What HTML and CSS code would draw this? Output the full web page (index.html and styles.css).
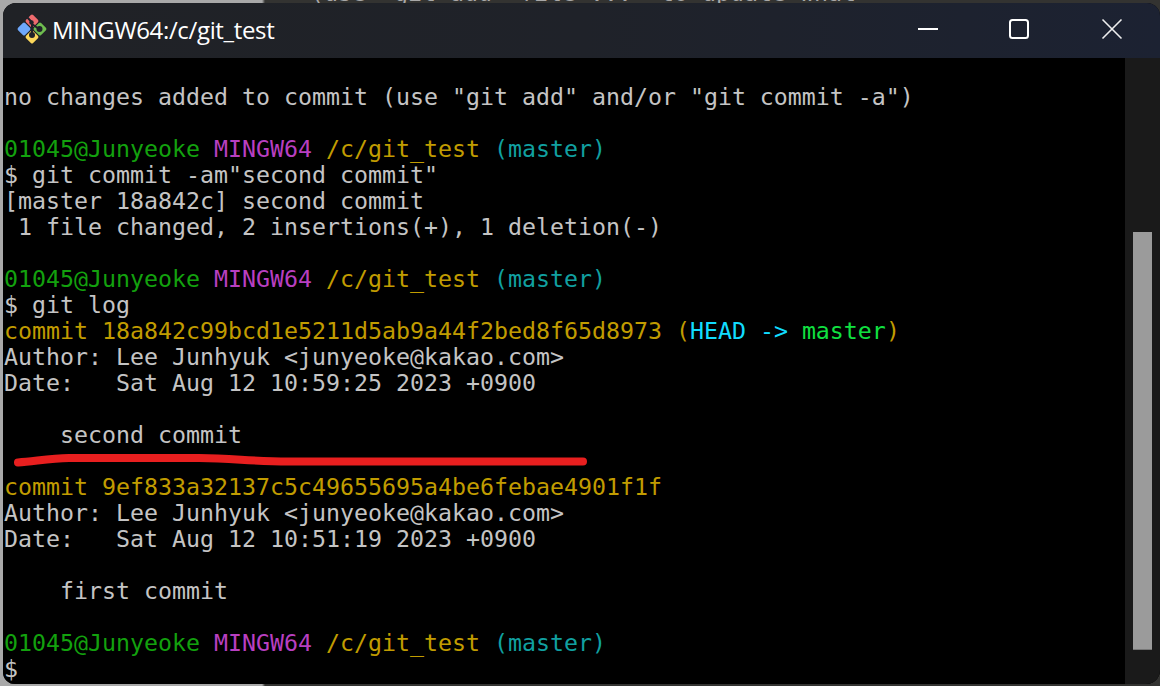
FILE: index.html
```html
<!DOCTYPE html>
<html lang="en">
<head>
<meta charset="utf-8">
<title>MINGW64:/c/git_test</title>
<link rel="stylesheet" href="styles.css">
</head>
<body>
<div class="desktop">
  <div class="backdrop"><div class="backdrop-left"></div><div class="backdrop-right"><span class="backdrop-text">(use "git add &lt;file&gt;..." to update what</span></div></div>
  <div class="window">
    <header class="titlebar">
      <svg class="logo" width="32" height="32" viewBox="0 0 32 32" aria-hidden="true">
        <rect x="11" y="3" width="10" height="10" rx="1.6" transform="rotate(45 16 8)" fill="#ee6b6e"/>
        <rect x="3" y="11" width="10" height="10" rx="1.6" transform="rotate(45 8 16)" fill="#6ea8fb"/>
        <rect x="19" y="11" width="10" height="10" rx="1.6" transform="rotate(45 24 16)" fill="#6ebd4f"/>
        <rect x="11" y="19" width="10" height="10" rx="1.6" transform="rotate(45 16 24)" fill="#fbd75b"/>
        <path d="M10.5 3.500 L16 9.500 L16 22 M16 11 L23 16" fill="none" stroke="#20222a" stroke-width="2"/>
        <circle cx="16" cy="22" r="3" fill="#20222a"/>
        <circle cx="23.500" cy="16" r="3" fill="#20222a"/>
        <circle cx="15.500" cy="9.500" r="2.200" fill="#20222a"/>
      </svg>
      <span class="title">MINGW64:/c/git_test</span>
      <div class="controls">
        <button class="control" aria-label="Minimize"><svg width="22" height="22" viewBox="0 0 22 22"><path d="M1 11H21" stroke="#fff" stroke-width="2"/></svg></button>
        <button class="control" aria-label="Maximize"><svg width="22" height="22" viewBox="0 0 22 22"><rect x="1" y="2" width="18" height="18" rx="2.500" fill="none" stroke="#fff" stroke-width="2"/></svg></button>
        <button class="control" aria-label="Close"><svg width="22" height="22" viewBox="0 0 22 22"><path d="M1.500 1.500L20.500 20.500M20.500 1.500L1.500 20.500" stroke="#eee" stroke-width="1.600"/></svg></button>
      </div>
    </header>
    <div class="body">
      <pre class="terminal"><span class="row"> </span>
<span class="row">no changes added to commit (use "git add" and/or "git commit -a")</span>
<span class="row"> </span>
<span class="row"><span class="green">01045@Junyeoke</span> <span class="magenta">MINGW64</span> <span class="yellow">/c/git_test</span> <span class="cyan">(master)</span></span>
<span class="row">$ git commit -am"second commit"</span>
<span class="row">[master 18a842c] second commit</span>
<span class="row"> 1 file changed, 2 insertions(+), 1 deletion(-)</span>
<span class="row"> </span>
<span class="row"><span class="green">01045@Junyeoke</span> <span class="magenta">MINGW64</span> <span class="yellow">/c/git_test</span> <span class="cyan">(master)</span></span>
<span class="row">$ git log</span>
<span class="row"><span class="yellow">commit 18a842c99bcd1e5211d5ab9a44f2bed8f65d8973 (</span><span class="head">HEAD -&gt; </span><span class="branch">master</span><span class="yellow">)</span></span>
<span class="row">Author: Lee Junhyuk &lt;junyeoke@kakao.com&gt;</span>
<span class="row">Date:   Sat Aug 12 10:59:25 2023 +0900</span>
<span class="row"> </span>
<span class="row">    second commit</span>
<span class="row"> </span>
<span class="row"><span class="yellow">commit 9ef833a32137c5c49655695a4be6febae4901f1f</span></span>
<span class="row">Author: Lee Junhyuk &lt;junyeoke@kakao.com&gt;</span>
<span class="row">Date:   Sat Aug 12 10:51:19 2023 +0900</span>
<span class="row"> </span>
<span class="row">    first commit</span>
<span class="row"> </span>
<span class="row"><span class="green">01045@Junyeoke</span> <span class="magenta">MINGW64</span> <span class="yellow">/c/git_test</span> <span class="cyan">(master)</span></span>
<span class="row">$</span></pre>
      <div class="scrollbar"><div class="thumb"></div></div>
      <svg class="annotation" width="580" height="20" viewBox="0 0 580 20" aria-hidden="true"><path d="M9 12.500 C25 11.500 40 8.500 60 8 L190 8 C225 8 240 11.500 280 11.500 L574 11.500" fill="none" stroke="#e81f1f" stroke-width="8" stroke-linecap="round"/></svg>
    </div>
  </div>
</div>
</body>
</html>
```

FILE: styles.css
```css
* { box-sizing: border-box; }
html, body { margin: 0; padding: 0; }
body { width: 1160px; height: 686px; overflow: hidden; background: #333331; }
.desktop { width: 1160px; height: 686px; overflow: hidden; background: linear-gradient(90deg, #a9a9a9 0, #a9a9a9 262px, #333331 265px); display: flex; flex-direction: column; }
.backdrop { height: 3px; flex: none; display: flex; overflow: hidden; }
.backdrop-left { width: 265px; flex: none; }
.backdrop-right { flex: 1; padding-left: 45px; overflow: hidden; white-space: pre; }
.backdrop-text { display: block; margin-top: -20px; font: 23.25px/26px "DejaVu Sans Mono", monospace; color: #a8a8a8; }
.window { flex: none; width: 1157px; height: 681px; margin-left: 3px; background: #000; border-radius: 13px 13px 14px 12px; overflow: hidden; display: flex; flex-direction: column; box-shadow: inset 0 -2px 0 #333; }
.titlebar { flex: none; height: 55px; display: flex; align-items: center; padding: 0 0 3px 13px; background: linear-gradient(90deg, #202226 0, #1f2229 50%, #1c2232 100%); }
.logo { flex: none; display: block; }
.title { margin-left: 4px; padding-top: 2px; font: 24px/32px "Open Sans", "Noto Sans", sans-serif; color: #fff; letter-spacing: -0.35px; }
.controls { margin-left: auto; margin-right: 2px; display: flex; align-items: center; }
.control { width: 92px; height: 32px; padding: 0; border: 0; background: none; display: flex; align-items: center; justify-content: center; }
.body { flex: 1; position: relative; display: flex; min-height: 0; background: #000; }
.terminal { flex: 1; margin: 0; padding: 0 0 0 1px; font: 23.25px/26px "DejaVu Sans Mono", monospace; color: #c4c4c4; overflow: hidden; }
.row { display: inline-block; height: 26px; white-space: pre; }
.green { color: #13a10e; }
.magenta { color: #b83fc0; }
.yellow { color: #c19c00; }
.cyan { color: #11a0a0; }
.head { color: #11dcff; }
.branch { color: #10e040; }
.scrollbar { flex: none; width: 35px; padding-left: 8px; background: #1a1a1a; }
.thumb { width: 19px; height: 418px; margin-top: 174px; background: #9b9b9b; border-bottom: 1px solid #777; }
.annotation { position: absolute; left: 6px; top: 392px; display: block; }
```
